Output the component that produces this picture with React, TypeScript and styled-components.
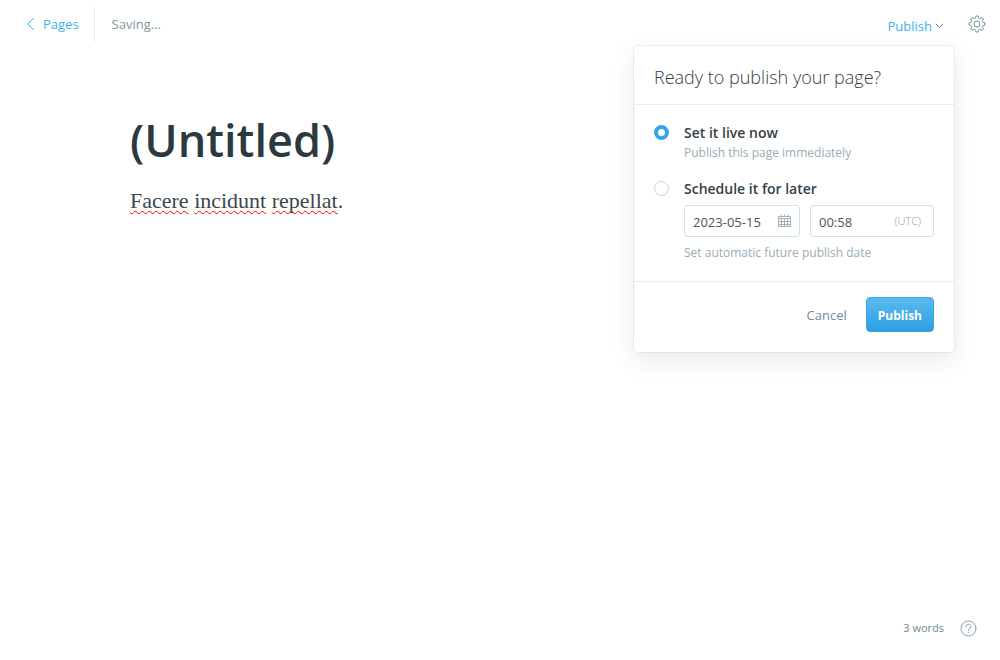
import React, { useState } from "react";
import styled, { createGlobalStyle } from "styled-components";

const sans = `"Open Sans", "Noto Sans", sans-serif`;

const GlobalStyle = createGlobalStyle`
  *, *::before, *::after { box-sizing: border-box; }
  body {
    margin: 0;
    background: #fff;
    color: #2b3940;
    font-family: ${sans};
    font-size: 13px;
    line-height: 20px;
  }
  button, input, textarea { font-family: inherit; margin: 0; }
`;

const Screen = styled.div`
  display: flex;
  flex-direction: column;
  min-height: 100vh;
`;

const TopBar = styled.header`
  display: flex;
  align-items: center;
  justify-content: space-between;
  height: 48px;
  padding: 0 7px 0 26px;
`;

const Group = styled.div`
  display: flex;
  align-items: center;
`;

const BackLink = styled.a`
  display: flex;
  align-items: center;
  gap: 8px;
  height: 35px;
  padding-right: 15px;
  border-right: 1px solid #e3edf4;
  color: #3eb0ef;
  font-size: 13px;
  text-decoration: none;
`;

const Status = styled.span`
  padding-left: 17px;
  color: #8495a0;
  font-size: 13px;
`;

const PublishMenu = styled.div`
  position: relative;
  margin-right: 17px;
`;

const MenuTrigger = styled.button`
  display: flex;
  align-items: center;
  gap: 3px;
  padding: 4px 0 0;
  border: 0;
  background: none;
  color: #3eb0ef;
  font-size: 13px;
  line-height: 20px;
`;

const IconButton = styled.button`
  display: flex;
  padding: 0;
  border: 0;
  background: none;
  color: #738a94;
`;

const SettingsButton = styled(IconButton)`
  padding: 7px;
`;

const HelpButton = styled(IconButton)`
  color: #8ba0ac;
`;

const Dropdown = styled.form`
  position: absolute;
  top: 34px;
  right: -10px;
  width: 320px;
  border-radius: 4px;
  background: #fff;
  box-shadow: 0 0 0 1px rgba(99, 114, 130, 0.1), 0 8px 24px rgba(27, 39, 51, 0.1);
`;

const DropdownHeader = styled.h2`
  margin: 0;
  padding: 19px 20px 15px;
  border-bottom: 1px solid #e3edf4;
  color: #343f44;
  font-size: 18px;
  font-weight: 300;
  line-height: 24px;
`;

const Options = styled.fieldset`
  margin: 0;
  padding: 18px 20px;
  border: 0;
`;

const Option = styled.div`
  display: flex;
  gap: 15px;
  & + & { margin-top: 16px; }
`;

const Radio = styled.input`
  appearance: none;
  flex: none;
  width: 15px;
  height: 15px;
  margin: 2px 0 0;
  border: 1px solid #c0d7e4;
  border-radius: 50%;
  background: #fff;
  &:checked { border: 4px solid #34a4ea; }
`;

const OptionBody = styled.div`
  flex: 1;
  min-width: 0;
`;

const OptionLabel = styled.label`
  display: block;
  color: #343f44;
  font-size: 14px;
  font-weight: 600;
  line-height: 20px;
`;

const Hint = styled.p`
  margin: 0;
  color: #9aacb5;
  font-size: 12px;
  line-height: 20px;
`;

const Fields = styled.div`
  display: grid;
  grid-template-columns: 29fr 31fr;
  gap: 10px;
  margin: 6px 0;
`;

const Field = styled.label`
  display: flex;
  align-items: center;
  height: 32px;
  min-width: 0;
  padding: 0 8px;
  border: 1px solid #d0e1eb;
  border-radius: 3px;
  color: #a5b1b8;
`;

const FieldInput = styled.input`
  flex: 1;
  min-width: 0;
  width: 0;
  padding: 1px 0 0;
  border: 0;
  outline: 0;
  background: none;
  color: #4a565c;
  font-size: 13px;
  line-height: 20px;
`;

const Zone = styled.span`
  padding-right: 4px;
  color: #8f9fa8;
  font-size: 11px;
  font-weight: 300;
`;

const DropdownFooter = styled.div`
  display: flex;
  align-items: center;
  justify-content: flex-end;
  gap: 19px;
  padding: 15px 20px 20px;
  border-top: 1px solid #e3edf4;
`;

const CancelButton = styled.button`
  padding: 0;
  border: 0;
  background: none;
  color: #738a94;
  font-size: 13px;
  line-height: 20px;
`;

const PublishButton = styled.button`
  height: 35px;
  padding: 2px 11px 0;
  border: 1px solid #3ba5e4;
  border-radius: 4px;
  background: linear-gradient(#5bbaf0, #2b9fe3);
  color: #fff;
  font-size: 12px;
  font-weight: 700;
`;

const Editor = styled.main`
  flex: 1;
  width: 100%;
  max-width: 780px;
  margin: 0 auto;
  padding: 64px 20px 0;
`;

const Title = styled.textarea`
  display: block;
  width: 100%;
  height: 56px;
  padding: 0;
  border: 0;
  outline: 0;
  resize: none;
  overflow: hidden;
  background: none;
  color: #2b3940;
  font-size: 45px;
  font-weight: 600;
  line-height: 56px;
`;

const Body = styled.div`
  padding-top: 17px;
  outline: 0;
  color: #3a474d;
  font-family: "Liberation Serif", serif;
  font-size: 22px;
  line-height: 32px;
`;

const Misspelled = styled.span`
  text-decoration: underline wavy #f00 1px;
  text-underline-offset: 2px;
  text-decoration-skip-ink: none;
`;

const BottomBar = styled.footer`
  display: flex;
  align-items: center;
  justify-content: flex-end;
  gap: 16px;
  padding: 0 23px 22px;
  color: #738a94;
  font-size: 11px;
`;

const ChevronLeft = () => (
  <svg width="9" height="14" viewBox="0 0 9 14" fill="none" stroke="currentColor" strokeWidth="1" strokeLinecap="round" aria-hidden="true">
    <path d="M7.5 1.5 1.5 7l6 5.5" />
  </svg>
);

const ChevronDown = () => (
  <svg width="9" height="6" viewBox="0 0 9 6" fill="none" stroke="#5f8ba4" strokeLinecap="round" strokeLinejoin="round" aria-hidden="true">
    <path d="m1 1 3.5 3.5L8 1" />
  </svg>
);

const Gear = () => (
  <svg width="18" height="18" viewBox="0 0 18 18" fill="none" stroke="currentColor" strokeLinejoin="round" aria-hidden="true">
    <circle cx="9" cy="9" r="3" />
    <path d="M7.6 2.3 8 1h2l.4 1.3a1.5 1.5 0 0 0 2.3.9l1.2-.7 1.5 1.5-.7 1.2a1.5 1.5 0 0 0 .9 2.3L17 8v2l-1.4.4a1.5 1.5 0 0 0-.9 2.3l.7 1.2-1.5 1.5-1.2-.7a1.5 1.5 0 0 0-2.3.9L10 17H8l-.4-1.4a1.5 1.5 0 0 0-2.3-.9l-1.2.7-1.5-1.5.7-1.2a1.5 1.5 0 0 0-.9-2.3L1 10V8l1.4-.5a1.5 1.5 0 0 0 .9-2.3L2.6 4l1.5-1.5 1.2.7a1.5 1.5 0 0 0 2.3-.9Z" />
  </svg>
);

const Calendar = () => (
  <svg width="13" height="14" viewBox="0 0 13 14" fill="none" stroke="currentColor" aria-hidden="true">
    <path d="M.5 2.5h12v10H.5zM.5 4.5h12M.5 7.5h12M.5 10.5h12M3.5 4.5v8M6.5 4.5v8M9.5 4.5v8M3 .5v2M6.5 .5v2M10 .5v2" />
  </svg>
);

const Help = () => (
  <svg width="17" height="17" viewBox="0 0 17 17" fill="none" stroke="currentColor" strokeLinecap="round" aria-hidden="true">
    <circle cx="8.5" cy="8.5" r="7.5" />
    <path d="M6 6.7a2.5 2.5 0 1 1 3.7 2.1c-.8.4-1.2.8-1.2 1.7M8.5 12.6v.1" />
  </svg>
);

export default function App() {
  const [timing, setTiming] = useState("now");
  const words = ["Facere", "incidunt", "repellat"];

  return (
    <Screen>
      <GlobalStyle />
      <TopBar>
        <Group>
          <BackLink href="#pages">
            <ChevronLeft />
            Pages
          </BackLink>
          <Status role="status">Saving...</Status>
        </Group>
        <Group>
          <PublishMenu>
            <MenuTrigger type="button" aria-expanded="true">
              Publish
              <ChevronDown />
            </MenuTrigger>
            <Dropdown onSubmit={(e) => e.preventDefault()}>
              <DropdownHeader>Ready to publish your page?</DropdownHeader>
              <Options>
                <Option>
                  <Radio type="radio" name="timing" id="now" checked={timing === "now"} onChange={() => setTiming("now")} />
                  <OptionBody>
                    <OptionLabel htmlFor="now">Set it live now</OptionLabel>
                    <Hint>Publish this page immediately</Hint>
                  </OptionBody>
                </Option>
                <Option>
                  <Radio type="radio" name="timing" id="later" checked={timing === "later"} onChange={() => setTiming("later")} />
                  <OptionBody>
                    <OptionLabel htmlFor="later">Schedule it for later</OptionLabel>
                    <Fields>
                      <Field>
                        <FieldInput type="text" aria-label="Publish date" defaultValue="2023-05-15" />
                        <Calendar />
                      </Field>
                      <Field>
                        <FieldInput type="text" aria-label="Publish time" defaultValue="00:58" />
                        <Zone>(UTC)</Zone>
                      </Field>
                    </Fields>
                    <Hint>Set automatic future publish date</Hint>
                  </OptionBody>
                </Option>
              </Options>
              <DropdownFooter>
                <CancelButton type="button">Cancel</CancelButton>
                <PublishButton type="submit">Publish</PublishButton>
              </DropdownFooter>
            </Dropdown>
          </PublishMenu>
          <SettingsButton type="button" aria-label="Settings">
            <Gear />
          </SettingsButton>
        </Group>
      </TopBar>
      <Editor>
        <Title aria-label="Page title" rows={1} spellCheck={false} defaultValue="(Untitled)" />
        <Body contentEditable suppressContentEditableWarning spellCheck={false} role="textbox" aria-label="Page content">
          {words.map((word, i) => (
            <React.Fragment key={word}>
              {i > 0 && " "}
              <Misspelled>{word}</Misspelled>
            </React.Fragment>
          ))}
          .
        </Body>
      </Editor>
      <BottomBar>
        <span>3 words</span>
        <HelpButton type="button" aria-label="Help">
          <Help />
        </HelpButton>
      </BottomBar>
    </Screen>
  );
}
